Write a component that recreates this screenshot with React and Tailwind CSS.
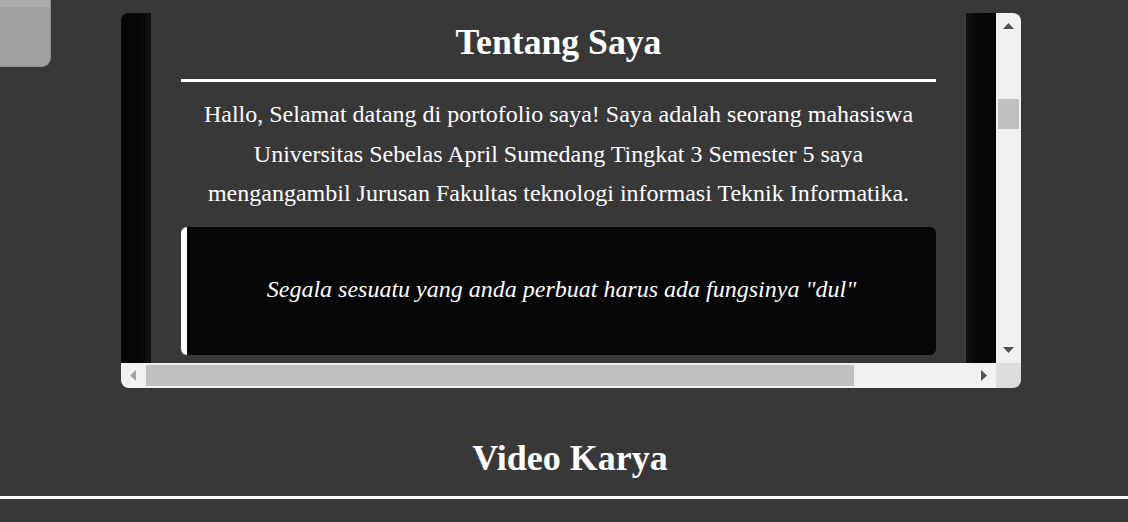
import React from "react";

function Tri({ dir, color, className }) {
  const pts = {
    up: "0,6 5.5,0 11,6",
    down: "0,0 11,0 5.5,6",
    left: "6,0 6,11 0,5.5",
    right: "0,0 0,11 6,5.5",
  }[dir];
  const vb = dir === "up" || dir === "down" ? "0 0 11 6" : "0 0 6 11";
  const w = dir === "up" || dir === "down" ? 11 : 6;
  const h = dir === "up" || dir === "down" ? 6 : 11;
  return (
    <svg width={w} height={h} viewBox={vb} className={className}>
      <polygon points={pts} fill={color} />
    </svg>
  );
}

export default function App() {
  return (
    <div
      className="relative min-h-screen h-[522px] overflow-hidden bg-[#383838] text-white"
      style={{ fontFamily: '"Liberation Serif", "Times New Roman", serif' }}
    >
      {/* partially hidden button at top-left */}
      <div className="absolute left-0 top-0 w-[51px] h-[67px] rounded-br-[9px] bg-[#a0a0a0] border-r border-b border-[#8e8e8e] overflow-hidden">
        <div className="h-[7px] bg-[#ababab]" />
      </div>

      <div className="pt-[13px] pl-[121px]">
        <div className="w-[900px] h-[375px] rounded-[8px] overflow-hidden flex flex-col">
          <div className="flex h-[350px]">
            <div className="w-[30px] bg-gradient-to-r from-[#060606] from-60% to-[#121212]" />
            <div className="w-[815px] overflow-hidden px-[30px] pt-[9px]">
              <h2 className="text-[35.7px] font-bold leading-[40px] text-center">Tentang Saya</h2>
              <div className="mt-[17px] h-[3px] bg-white" />
              <p className="mt-[13px] text-[24px] leading-[39.6px] text-center">
                Hallo, Selamat datang di portofolio saya! Saya adalah seorang mahasiswa Universitas Sebelas April Sumedang Tingkat 3 Semester 5 saya mengangambil Jurusan Fakultas teknologi informasi Teknik Informatika.
              </p>
              <div className="mt-[13px] h-[128px] rounded-[6px] border-l-[6px] border-white bg-[#060606] pt-[43px]">
                <p className="text-[24px] leading-[39.6px] italic text-center">
                  Segala sesuatu yang anda perbuat harus ada fungsinya "dul"
                </p>
              </div>
            </div>
            <div className="w-[30px] bg-gradient-to-l from-[#060606] from-55% to-[#121212]" />
            <div className="w-[25px] bg-[#f1f1f1] flex flex-col items-center">
              <div className="h-[10px]" />
              <Tri dir="up" color="#505050" />
              <div className="mt-[70px] w-[21px] h-[30px] bg-[#c1c1c1]" />
              <div className="flex-1" />
              <Tri dir="down" color="#505050" className="mb-[10px]" />
            </div>
          </div>
          <div className="flex h-[25px]">
            <div className="w-[875px] bg-[#f1f1f1] flex items-center">
              <Tri dir="left" color="#a3a3a3" className="ml-[9px]" />
              <div className="ml-[10px] w-[708px] h-[21px] bg-[#c1c1c1]" />
              <div className="flex-1" />
              <Tri dir="right" color="#505050" className="mr-[9px]" />
            </div>
            <div className="w-[25px] bg-[#dcdcdc]" />
          </div>
        </div>
      </div>

      <h2 className="mt-[50px] pl-[12px] text-[36px] font-bold leading-[40px] text-center">Video Karya</h2>
      <div className="mt-[18px] h-[3px] bg-white" />
    </div>
  );
}
